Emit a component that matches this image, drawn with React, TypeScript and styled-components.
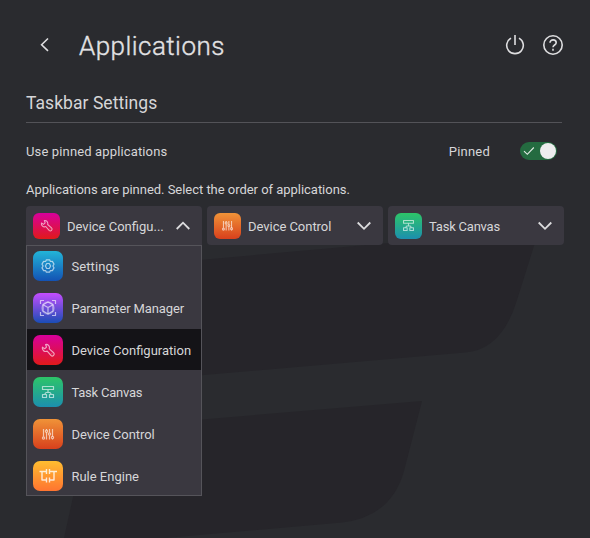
import React from "react";
import styled, { createGlobalStyle } from "styled-components";

const GlobalStyle = createGlobalStyle`
  *, *::before, *::after { box-sizing: border-box; }
  body {
    margin: 0;
    background: #2a2b2f;
    color: #d6d6d8;
    font-family: Roboto, "Liberation Sans", sans-serif;
    font-size: 13px;
    overflow: hidden;
  }
`;

const Page = styled.main`
  position: relative;
  width: 590px;
  height: 538px;
  padding: 0 26px;
  overflow: hidden;
`;

const Watermark = styled.svg`
  position: absolute;
  inset: 0;
  z-index: -1;
  fill: #26252a;
`;

const Header = styled.header`
  display: flex;
  align-items: center;
  height: 90px;
  padding-left: 11px;
`;

const IconButton = styled.button`
  display: flex;
  padding: 0;
  border: 0;
  background: none;
  color: #dedee0;
`;

const Title = styled.h1`
  margin: 1px auto 0 26px;
  font-size: 26px;
  font-weight: 300;
  line-height: 32px;
  letter-spacing: 0.45px;
  color: #e2e2e4;
  -webkit-text-stroke: 0.35px #e2e2e4;
`;

const HeaderActions = styled.div`
  display: flex;
  gap: 16px;
`;

const SectionTitle = styled.h2`
  height: 33px;
  margin: 0 2px 0 0;
  padding-top: 2px;
  border-bottom: 1px solid #535358;
  font-size: 17.5px;
  font-weight: 400;
  line-height: 22px;
  letter-spacing: 0.05px;
`;

const Label = styled.span<{ $track?: number }>`
  letter-spacing: ${(p) => p.$track ?? 0}px;
  white-space: nowrap;
`;

const SettingRow = styled.div`
  display: flex;
  align-items: center;
  height: 56px;
  padding-right: 7px;
`;

const PinnedLabel = styled(Label)`
  margin-left: auto;
  margin-right: 30px;
`;

const Switch = styled.div`
  display: flex;
  align-items: center;
  justify-content: space-between;
  width: 37px;
  height: 18px;
  padding: 0 1px 0 3px;
  border-radius: 9px;
  background: #246b40;
`;

const Knob = styled.span`
  width: 16px;
  height: 16px;
  border-radius: 50%;
  background: #ededee;
`;

const Hint = styled.p`
  height: 27px;
  margin: 0;
  padding-top: 3px;
  line-height: 16px;
`;

const SelectRow = styled.div`
  display: grid;
  grid-template-columns: repeat(3, 176px);
  gap: 5px;
`;

const SelectBox = styled.div<{ $open?: boolean }>`
  display: flex;
  align-items: center;
  height: 39px;
  padding: 0 12px 0 7px;
  border-radius: ${(p) => (p.$open ? "4px 4px 0 0" : "4px")};
  background: #3a3840;
`;

const SelectLabel = styled(Label)`
  flex: 1;
  margin-left: 7px;
  padding-top: 1px;
`;

const Tile = styled.span<{ $from: string; $to: string; $small?: boolean }>`
  display: flex;
  flex: none;
  align-items: center;
  justify-content: center;
  width: ${(p) => (p.$small ? 27 : 30)}px;
  height: ${(p) => (p.$small ? 26 : 30)}px;
  border-radius: ${(p) => (p.$small ? 6 : 7)}px;
  background: linear-gradient(${(p) => p.$from}, ${(p) => p.$to});
  color: rgba(255, 255, 255, 0.62);
`;

const Menu = styled.ul`
  width: 176px;
  height: 251px;
  margin: 0;
  padding: 0;
  border: 1px solid #55545a;
  background: #3a3840;
  overflow: hidden;
  list-style: none;
`;

const MenuItem = styled.li<{ $selected?: boolean }>`
  display: flex;
  align-items: flex-end;
  gap: 8.4px;
  height: 41px;
  margin-bottom: 1px;
  padding: 0 0 5px 6px;
  background: ${(p) => (p.$selected ? "#141317" : "transparent")};
  line-height: 28px;

  &:first-child { height: 40px; }
`;

type AppId = "settings" | "parameters" | "configuration" | "canvas" | "control" | "rules";

interface AppInfo {
  id: AppId;
  name: string;
  from: string;
  to: string;
  track: number;
}

const apps: AppInfo[] = [
  { id: "settings", name: "Settings", from: "#22b4d8", to: "#1352b4", track: 0.1 },
  { id: "parameters", name: "Parameter Manager", from: "#c44dff", to: "#1a4db5", track: -0.13 },
  { id: "configuration", name: "Device Configuration", from: "#d8009c", to: "#e01a1a", track: 0 },
  { id: "canvas", name: "Task Canvas", from: "#2dc568", to: "#1c8fae", track: -0.22 },
  { id: "control", name: "Device Control", from: "#f09338", to: "#d8401c", track: -0.04 },
  { id: "rules", name: "Rule Engine", from: "#ffbd30", to: "#ff7430", track: 0 },
];

const glyphs: Record<AppId, React.ReactNode> = {
  settings: (
    <>
      <path d="M13.400 8.800h3.200l.8 1.700 2-.1 1.600 2.700-1.100 1.900 1.100 1.900-1.600 2.700-2-.1-.8 1.700h-3.200l-.8-1.700-2 .1L9 16.900l1.100-1.900L9 13.100l1.600-2.700 2 .1z" />
      <path d="M13.700 12.500h2.600l1.300 2.500-1.300 2.500h-2.600L12.400 15z" />
    </>
  ),
  parameters: (
    <>
      <path d="M7.500 11V7.500H11M19 7.500h3.500V11M22.500 19v3.500H19M11 22.500H7.500V19" />
      <path d="M15 9l5 2.700v6.300l-5 2.900-5-2.900v-6.300zM10 11.700l5 2.800 5-2.800M15 14.500v6.400" />
      <circle cx="15" cy="15" r="6.200" opacity=".5" />
    </>
  ),
  configuration: (
    <path d="M12.600 9.500a3.300 3.300 0 0 1 3.700 4.400l4.300 3.800a1.900 1.900 0 0 1-2.700 2.700l-3.700-4.300a3.400 3.400 0 0 1-4.800-3.900l2.300 1.500 1.800-1.600zM18.700 18.700h.4" />
  ),
  canvas: (
    <path d="M9.500 9.500h11v3h-11zM15 12.500v3M11.500 17.500l1.500-2h4l1.500 2M9.500 17.500h4v3h-4zM16.500 17.500h4v3h-4z" />
  ),
  control: (
    <>
      <path d="M10.500 10v7.500M13.500 13.500v7M13.500 10v1M16.500 10v3.500M16.500 16.500v4M19.500 10v7.500M19.500 20v.5" />
      <circle cx="10.500" cy="19" r="1.100" />
      <circle cx="13.500" cy="12.300" r="1.100" />
      <circle cx="16.500" cy="15" r="1.100" />
      <circle cx="19.500" cy="18.500" r="1.100" />
    </>
  ),
  rules: (
    <path
      d="M6.500 10.500h7M16.500 10.500h7.500M13.500 8v5M16.500 8v5M9 10.500v8.500h4.500M16.500 19h4.500v-8.500M13.500 16.500v5M16.500 16.500v5"
      stroke="rgba(255,255,255,.8)"
      strokeWidth="1.400"
    />
  ),
};

function AppTile({ app, small }: { app: AppInfo; small?: boolean }) {
  const size = small ? 27 : 30;
  return (
    <Tile $from={app.from} $to={app.to} $small={small}>
      <svg width={size} height={size} viewBox="0 0 30 30" fill="none" stroke="currentColor" strokeWidth="1.200" strokeLinejoin="round">
        {glyphs[app.id]}
      </svg>
    </Tile>
  );
}

function Chevron({ up }: { up?: boolean }) {
  return (
    <svg width="14" height="10" viewBox="0 0 14 10" fill="none" stroke="#dcdcde" strokeWidth="1.800">
      <path d={up ? "M.7 8 7 1.700 13.300 8" : "M.7 1.500 7 7.800 13.300 1.500"} />
    </svg>
  );
}

function Select({ app, label, open }: { app: AppInfo; label?: string; open?: boolean }) {
  return (
    <SelectBox $open={open}>
      <AppTile app={app} small />
      <SelectLabel $track={app.track}>{label ?? app.name}</SelectLabel>
      <Chevron up={open} />
    </SelectBox>
  );
}

export default function App() {
  return (
    <Page>
      <GlobalStyle />
      <Watermark width="590" height="538" aria-hidden>
        <path d="M110 268 378 244 539 230 517 300Q502 350 465 352.500L100 384z" />
        <path d="M88 429 422 401 404 471Q391 517 342 522.500L165 538H64z" />
      </Watermark>
      <Header>
        <IconButton aria-label="Back">
          <svg width="16" height="18" viewBox="0 0 16 18" fill="none" stroke="currentColor" strokeWidth="1.600">
            <path d="M11 2.500 4.600 8.700l6.400 6.200" />
          </svg>
        </IconButton>
        <Title>Applications</Title>
        <HeaderActions>
          <IconButton aria-label="Power">
            <svg width="22" height="22" viewBox="0 0 22 22" fill="none" stroke="currentColor" strokeWidth="1.600">
              <path d="M11 1v10M7 4.100a8.300 8.300 0 1 0 8 0" />
            </svg>
          </IconButton>
          <IconButton aria-label="Help">
            <svg width="22" height="22" viewBox="0 0 22 22" fill="none" stroke="currentColor" strokeWidth="1.600">
              <circle cx="11" cy="11" r="9.200" />
              <path d="M8 8.700c0-3.800 6.200-3.700 6.200 0 0 2.300-3.200 2.300-3.200 4.500M11 14.800v1.900" />
            </svg>
          </IconButton>
        </HeaderActions>
      </Header>
      <SectionTitle>Taskbar Settings</SectionTitle>
      <SettingRow>
        <Label $track={0.14}>Use pinned applications</Label>
        <PinnedLabel $track={0.2}>Pinned</PinnedLabel>
        <Switch role="switch" aria-checked>
          <svg width="12" height="10" viewBox="0 0 12 10" fill="none" stroke="#e4ece6" strokeWidth="1.100">
            <path d="M1 5.200 4.300 8.300 10.800 1.500" />
          </svg>
          <Knob />
        </Switch>
      </SettingRow>
      <Hint>
        <Label $track={-0.03}>Applications are pinned. Select the order of applications.</Label>
      </Hint>
      <SelectRow>
        <Select app={apps[2]} label="Device Configu..." open />
        <Select app={apps[4]} />
        <Select app={apps[3]} />
      </SelectRow>
      <Menu>
        {apps.map((app) => (
          <MenuItem key={app.id} $selected={app.id === "configuration"}>
            <AppTile app={app} />
            <Label $track={app.track}>{app.name}</Label>
          </MenuItem>
        ))}
      </Menu>
    </Page>
  );
}
